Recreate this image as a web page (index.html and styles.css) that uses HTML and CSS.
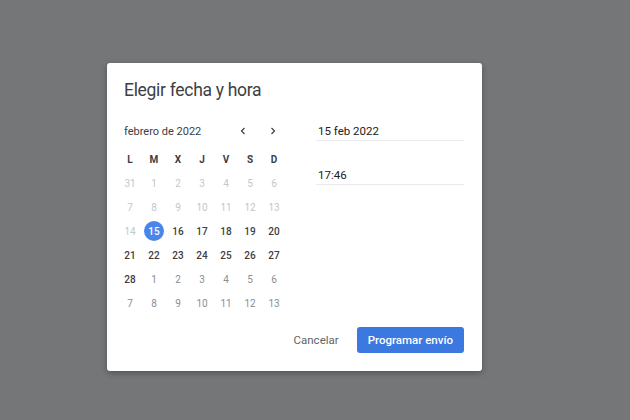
FILE: index.html
```html
<!DOCTYPE html>
<html lang="es">

<head>
    <meta charset="UTF-8">
    <meta name="viewport" content="width=device-width, initial-scale=1.0">
    <title>Elegir fecha y hora</title>
    <link rel="stylesheet" href="styles.css">
</head>

<body>
    <div class="dialogo">
        <h1 class="titulo">Elegir fecha y hora</h1>

        <div class="cuerpo">
            <div class="calendario">
                <div class="cabecera">
                    <span class="mes">febrero de 2022</span>
                    <span class="flechas">
                        <span class="flecha">
                            <svg width="10" height="10" viewBox="0 0 10 10"><path d="M6.5 2 L3.5 5 L6.5 8" fill="none" stroke="#3c4043" stroke-width="1.2"/></svg>
                        </span>
                        <span class="flecha">
                            <svg width="10" height="10" viewBox="0 0 10 10"><path d="M3.5 2 L6.5 5 L3.5 8" fill="none" stroke="#3c4043" stroke-width="1.2"/></svg>
                        </span>
                    </span>
                </div>

                <div class="rejilla">
                    <span class="dia-semana">L</span>
                    <span class="dia-semana">M</span>
                    <span class="dia-semana">X</span>
                    <span class="dia-semana">J</span>
                    <span class="dia-semana">V</span>
                    <span class="dia-semana">S</span>
                    <span class="dia-semana">D</span>

                    <span class="dia pasado">31</span>
                    <span class="dia pasado">1</span>
                    <span class="dia pasado">2</span>
                    <span class="dia pasado">3</span>
                    <span class="dia pasado">4</span>
                    <span class="dia pasado">5</span>
                    <span class="dia pasado">6</span>

                    <span class="dia pasado">7</span>
                    <span class="dia pasado">8</span>
                    <span class="dia pasado">9</span>
                    <span class="dia pasado">10</span>
                    <span class="dia pasado">11</span>
                    <span class="dia pasado">12</span>
                    <span class="dia pasado">13</span>

                    <span class="dia pasado">14</span>
                    <span class="dia"><span class="seleccionado">15</span></span>
                    <span class="dia">16</span>
                    <span class="dia">17</span>
                    <span class="dia">18</span>
                    <span class="dia">19</span>
                    <span class="dia">20</span>

                    <span class="dia">21</span>
                    <span class="dia">22</span>
                    <span class="dia">23</span>
                    <span class="dia">24</span>
                    <span class="dia">25</span>
                    <span class="dia">26</span>
                    <span class="dia">27</span>

                    <span class="dia">28</span>
                    <span class="dia otro-mes">1</span>
                    <span class="dia otro-mes">2</span>
                    <span class="dia otro-mes">3</span>
                    <span class="dia otro-mes">4</span>
                    <span class="dia otro-mes">5</span>
                    <span class="dia otro-mes">6</span>

                    <span class="dia otro-mes">7</span>
                    <span class="dia otro-mes">8</span>
                    <span class="dia otro-mes">9</span>
                    <span class="dia otro-mes">10</span>
                    <span class="dia otro-mes">11</span>
                    <span class="dia otro-mes">12</span>
                    <span class="dia otro-mes">13</span>
                </div>
            </div>

            <div class="campos">
                <div class="campo">15 feb 2022</div>
                <div class="campo">17:46</div>
            </div>
        </div>

        <div class="pie">
            <button type="button" class="boton-texto">Cancelar</button>
            <button type="button" class="boton-azul">Programar envío</button>
        </div>
    </div>
</body>

</html>
```

FILE: styles.css
```css
body {
    margin: 0;
    height: 420px;
    background-color: #757677;
    font-family: Roboto, "Liberation Sans", sans-serif;
    overflow: hidden;
}

.dialogo {
    box-sizing: border-box;
    width: 375px;
    height: 308px;
    margin: 63px 0 0 107px;
    padding: 15px 18px 0 11px;
    background-color: #fff;
    border-radius: 3px;
    box-shadow: 0 2px 6px rgba(0, 0, 0, 0.3);
}

.titulo {
    margin: 0;
    padding-left: 6px;
    font-size: 17.5px;
    line-height: 24px;
    font-weight: 400;
    letter-spacing: -0.3px;
    color: #3c4043;
}

.cuerpo {
    display: flex;
    gap: 30px;
    margin-top: 17px;
}

.calendario {
    width: 168px;
}

.cabecera {
    display: flex;
    justify-content: space-between;
    align-items: center;
    height: 24px;
    padding-left: 6px;
}

.mes {
    font-size: 11px;
    color: #3c4043;
}

.flechas {
    display: flex;
    gap: 6px;
    margin-right: 1px;
}

.flecha {
    display: flex;
    align-items: center;
    justify-content: center;
    width: 24px;
    height: 24px;
}

.rejilla {
    display: grid;
    grid-template-columns: repeat(7, 24px);
    grid-auto-rows: 24px;
    margin-top: 4px;
}

.dia-semana,
.dia {
    display: flex;
    align-items: center;
    justify-content: center;
    font-size: 10px;
}

.dia-semana {
    font-weight: 700;
    color: #3c4043;
}

.dia {
    font-weight: 500;
    color: #3c4043;
}

.pasado {
    font-weight: 400;
    color: #c4c6c8;
}

.otro-mes {
    font-weight: 400;
    color: #8a8e93;
}

.seleccionado {
    display: flex;
    align-items: center;
    justify-content: center;
    width: 20px;
    height: 20px;
    border-radius: 50%;
    background-color: #4a85ea;
    color: #fff;
}

.campos {
    width: 148px;
}

.campo {
    padding: 4px 0 1px 2px;
    font-size: 11.5px;
    line-height: 16px;
    color: #202124;
    border-bottom: 1px solid #e8eaed;
}

.campo + .campo {
    margin-top: 22px;
}

.pie {
    display: flex;
    justify-content: flex-end;
    align-items: center;
    gap: 7px;
    margin-top: 12px;
}

.boton-texto,
.boton-azul {
    height: 26px;
    padding: 0 11px;
    border: none;
    border-radius: 3px;
    font-family: Roboto, "Liberation Sans", sans-serif;
    font-size: 11.5px;
}

.boton-texto {
    background: none;
    font-weight: 400;
    color: #5f6368;
}

.boton-azul {
    font-weight: 500;
    background-color: #3b78e0;
    color: #fff;
}
```
